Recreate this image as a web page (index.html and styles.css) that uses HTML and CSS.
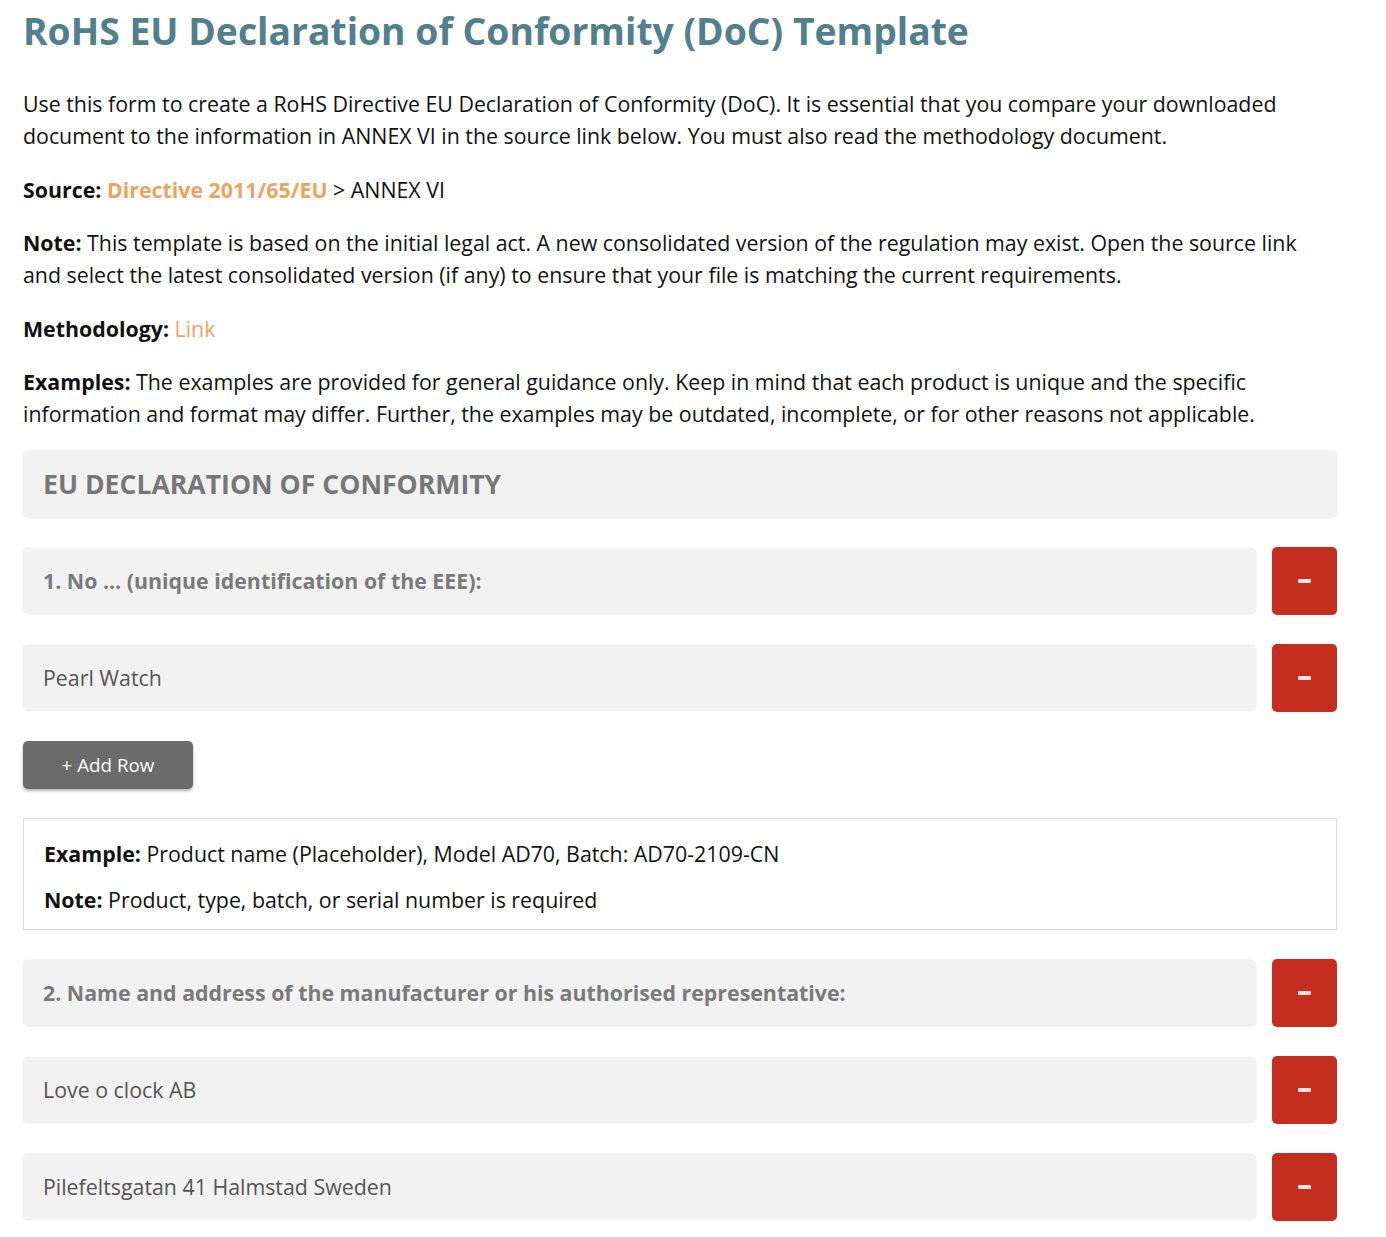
FILE: index.html
```html
<!DOCTYPE html>
<html lang="en">
<head>
<meta charset="utf-8">
<title>RoHS EU Declaration of Conformity (DoC) Template</title>
<link rel="stylesheet" href="styles.css">
</head>
<body>
<main class="page">
  <h1 class="title">RoHS EU Declaration of Conformity (DoC) Template</h1>
  <p class="para">Use this form to create a RoHS Directive EU Declaration of Conformity (DoC). It is essential that you compare your downloaded document to the information in ANNEX VI in the source link below. You must also read the methodology document.</p>
  <p class="para"><b>Source:</b> <a class="link strong-link" href="#">Directive 2011/65/EU</a> &gt; ANNEX VI</p>
  <p class="para"><b>Note:</b> This template is based on the initial legal act. A new consolidated version of the regulation may exist. Open the source link and select the latest consolidated version (if any) to ensure that your file is matching the current requirements.</p>
  <p class="para"><b>Methodology:</b> <a class="link" href="#">Link</a></p>
  <p class="para"><b>Examples:</b> The examples are provided for general guidance only. Keep in mind that each product is unique and the specific information and format may differ. Further, the examples may be outdated, incomplete, or for other reasons not applicable.</p>

  <div class="form">
    <div class="box heading">EU DECLARATION OF CONFORMITY</div>

    <div class="row">
      <div class="box field label">1. No ... (unique identification of the EEE):</div>
      <button class="remove" type="button" aria-label="Remove row"><span class="bar"></span></button>
    </div>
    <div class="row">
      <div class="box field value">Pearl Watch</div>
      <button class="remove" type="button" aria-label="Remove row"><span class="bar"></span></button>
    </div>

    <div><button class="add" type="button">+ Add Row</button></div>

    <div class="example">
      <p><b>Example:</b> Product name (Placeholder), Model AD70, Batch: AD70-2109-CN</p>
      <p><b>Note:</b> Product, type, batch, or serial number is required</p>
    </div>

    <div class="row">
      <div class="box field label">2. Name and address of the manufacturer or his authorised representative:</div>
      <button class="remove" type="button" aria-label="Remove row"><span class="bar"></span></button>
    </div>
    <div class="row">
      <div class="box field value">Love o clock AB</div>
      <button class="remove" type="button" aria-label="Remove row"><span class="bar"></span></button>
    </div>
    <div class="row">
      <div class="box field value">Pilefeltsgatan 41 Halmstad Sweden</div>
      <button class="remove" type="button" aria-label="Remove row"><span class="bar"></span></button>
    </div>
  </div>
</main>
</body>
</html>
```

FILE: styles.css
```css
* { box-sizing: border-box; }
html, body { margin: 0; padding: 0; background: #fff; }
body {
  font-family: "Open Sans", "Liberation Sans", sans-serif;
  color: #111;
  font-size: 21.35px;
  line-height: 32px;
}
.page {
  width: 1314px;
  margin-left: 23px;
  padding-top: 7px;
}
.title {
  margin: 0 0 33px 0;
  font-size: 37.3px;
  line-height: 48px;
  font-weight: 700;
  color: #527f8c;
}
.para {
  margin: 0 0 21.5px 0;
}
.para b { font-weight: 700; }
.link { color: #eba45f; text-decoration: none; }
.strong-link { font-weight: 700; }

.form {
  display: flex;
  flex-direction: column;
  gap: 29px;
  margin-top: -1px;
}
.box {
  background: #f2f2f2;
  border-radius: 5px;
  box-shadow: 0 0 1.5px rgba(0,0,0,0.14);
  display: flex;
  align-items: center;
  padding: 0 20px;
}
.heading {
  height: 67px;
  font-size: 26.6px;
  font-weight: 700;
  color: #777;
}
.row {
  display: flex;
  gap: 16px;
  align-items: center;
}
.field {
  flex: 1;
  height: 66px;
}
.label { font-weight: 700; color: #7a7a7a; }
.value { color: #555; }
.remove {
  width: 65px;
  height: 68px;
  border: none;
  border-radius: 5px;
  background: #c52d1f;
  display: flex;
  align-items: center;
  justify-content: center;
  padding: 0;
}
.bar {
  display: block;
  width: 13px;
  height: 4px;
  border-radius: 1px;
  background: #fbe6e4;
}
.add {
  width: 170px;
  height: 48px;
  border: none;
  border-radius: 5px;
  background: #6b6b6b;
  color: #fff;
  font-family: inherit;
  font-size: 18.8px;
  box-shadow: 0 2px 3px rgba(0,0,0,0.3);
  padding: 0;
}
.example {
  border: 1px solid #ddd;
  padding: 19px 20px 13px;
}
.example p { margin: 0; }
.example p + p { margin-top: 14px; }
```
